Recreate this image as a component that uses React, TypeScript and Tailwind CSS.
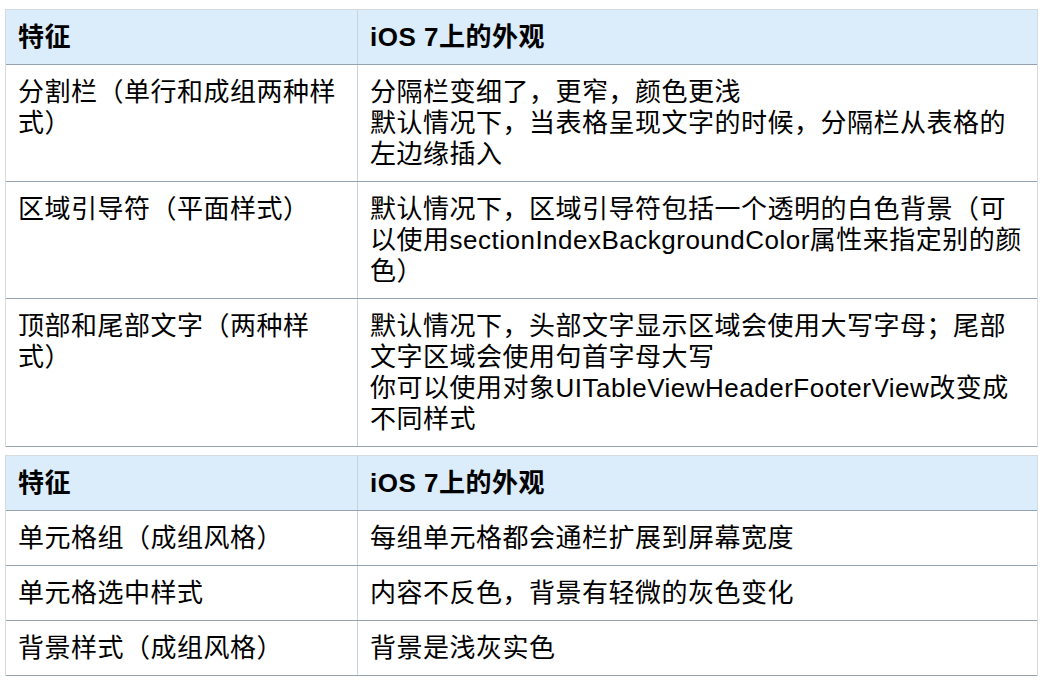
const tables: { rows: [string, string[]][] }[] = [
  {
    rows: [
      ['分割栏（单行和成组两种样式）', ['分隔栏变细了，更窄，颜色更浅', '默认情况下，当表格呈现文字的时候，分隔栏从表格的左边缘插入']],
      ['区域引导符（平面样式）', ['默认情况下，区域引导符包括一个透明的白色背景（可以使用sectionIndexBackgroundColor属性来指定别的颜色）']],
      ['顶部和尾部文字（两种样式）', ['默认情况下，头部文字显示区域会使用大写字母；尾部文字区域会使用句首字母大写', '你可以使用对象UITableViewHeaderFooterView改变成不同样式']],
    ],
  },
  {
    rows: [
      ['单元格组（成组风格）', ['每组单元格都会通栏扩展到屏幕宽度']],
      ['单元格选中样式', ['内容不反色，背景有轻微的灰色变化']],
      ['背景样式（成组风格）', ['背景是浅灰实色']],
    ],
  },
];

function Row({ left, right, header }: { left: string; right: string[]; header?: boolean }) {
  return (
    <div
      className={`grid grid-cols-[352px_1fr] border-b border-[#95a2af] ${header ? 'bg-[#dbecfa] font-bold' : ''}`}
    >
      <div className="border-r border-[#c6d4e1] pl-3 pr-3 pt-3 pb-[11px]">{left}</div>
      <div className="pl-3 pr-3 pt-3 pb-[11px]">
        {right.map((line) => (
          <div key={line}>{line}</div>
        ))}
      </div>
    </div>
  );
}

export default function App() {
  return (
    <div className="w-[1044px] h-[684px] bg-white pt-[9px] pl-[5px] text-black text-[26px] leading-[31px] tracking-[0.5px] font-['Liberation_Sans','Noto_Sans_CJK_SC',sans-serif]">
      {tables.map((t, i) => (
        <div key={i} className={`w-[1033px] border-t border-l border-r border-[#d5dadf] ${i > 0 ? 'mt-2' : ''}`}>
          <Row header left="特征" right={['iOS 7上的外观']} />
          {t.rows.map(([l, r]) => (
            <Row key={l} left={l} right={r} />
          ))}
        </div>
      ))}
    </div>
  );
}
